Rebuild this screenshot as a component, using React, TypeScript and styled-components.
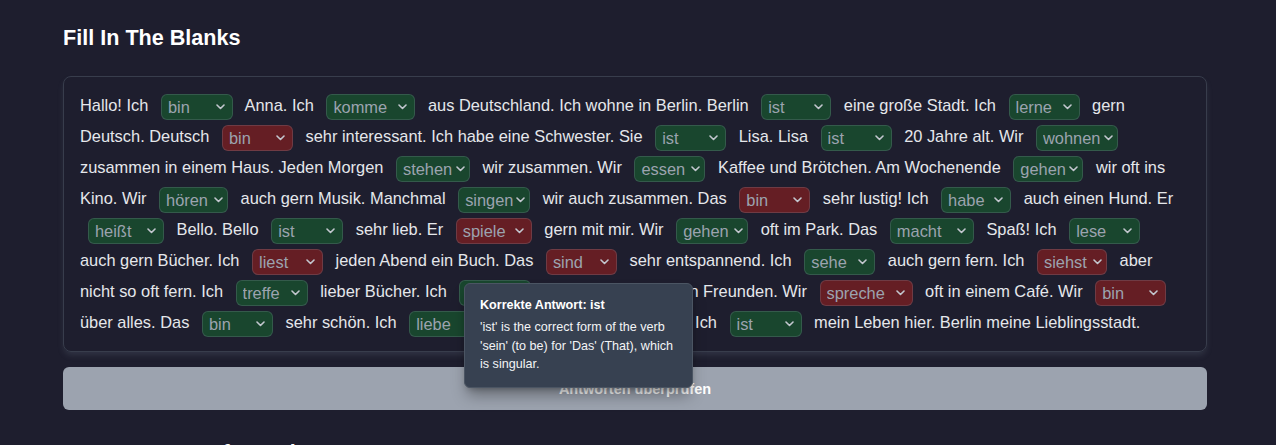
import React from "react";
import styled, { createGlobalStyle, css } from "styled-components";

const GlobalStyle = createGlobalStyle`
  html, body {
    margin: 0;
    padding: 0;
    background: #1e1e2e;
  }
  body {
    font-family: "Liberation Sans", Arial, sans-serif;
    color: #e5e7eb;
  }
`;

type Blank = { value: string; answer: string; width: number; correct: boolean; tight: boolean };
type Segment = string | Blank;

const b = (value: string, width: number, correct = true, answer?: string, tight = false): Blank => ({
  value,
  width,
  correct,
  tight,
  answer: answer ?? value,
});

const passage: Segment[] = [
  "Hallo! Ich", b("bin", 72), "Anna. Ich", b("komme", 89),
  "aus Deutschland. Ich wohne in Berlin. Berlin", b("ist", 70),
  "eine große Stadt. Ich", b("lerne", 71),
  "gern Deutsch. Deutsch", b("bin", 71, false, "ist"),
  "sehr interessant. Ich habe eine Schwester. Sie", b("ist", 71),
  "Lisa. Lisa", b("ist", 71), "20 Jahre alt. Wir", b("wohnen", 82, true, undefined, true),
  "zusammen in einem Haus. Jeden Morgen", b("stehen", 74, true, undefined, true),
  "wir zusammen. Wir", b("essen", 71, true, undefined, true),
  "Kaffee und Brötchen. Am Wochenende", b("gehen", 70, true, undefined, true),
  "wir oft ins Kino. Wir", b("hören", 69, true, undefined, true),
  "auch gern Musik. Manchmal", b("singen", 72, true, undefined, true),
  "wir auch zusammen. Das", b("bin", 71, false, "ist"),
  "sehr lustig! Ich", b("habe", 70), "auch einen Hund. Er", b("heißt", 76),
  "Bello. Bello", b("ist", 72), "sehr lieb. Er", b("spiele", 76, false, "spielt"),
  "gern mit mir. Wir", b("gehen", 72, true, undefined, true), "oft im Park. Das", b("macht", 84),
  "Spaß! Ich", b("lese", 71), "auch gern Bücher. Ich", b("liest", 71, false, "lese"),
  "jeden Abend ein Buch. Das", b("sind", 71, false, "ist"),
  "sehr entspannend. Ich", b("sehe", 71), "auch gern fern. Ich", b("siehst", 70, false, "sehe", true),
  "aber nicht so oft fern. Ich", b("treffe", 72), "lieber Bücher. Ich", b("spiele", 72),
  "oft Tennis mit meinen Freunden. Wir", b("spreche", 93, false, "sprechen"),
  "oft in einem Café. Wir", b("bin", 71, false, "lieben"),
  "über alles. Das", b("bin", 71), "sehr schön. Ich", b("liebe", 72),
  "diese Stadt sehr. Es ist toll. Ich", b("ist", 72),
  "mein Leben hier. Berlin meine Lieblingsstadt.",
];

const Page = styled.main`
  padding: 24px 0 0 63px;
  width: 1144px;
`;

const SectionTitle = styled.h2`
  margin: 0 0 24px;
  font-size: 21.6px;
  line-height: 28px;
  font-weight: 700;
  color: #ffffff;
`;

const Card = styled.section`
  position: relative;
  border: 1px solid #383d4c;
  border-radius: 8px;
  padding: 13px 22px 13px 16px;
  box-shadow: 0 4px 6px -1px rgba(120, 130, 150, 0.22);
`;

const Passage = styled.p`
  margin: 0;
  font-size: 16.4px;
  line-height: 31px;
  color: #e5e7eb;
`;

const BlankBox = styled.span<{ $correct: boolean }>`
  position: relative;
  display: inline-block;
  box-sizing: border-box;
  height: 26px;
  margin: 0 8px;
  vertical-align: middle;
  border-radius: 6px;
  border: 1px solid rgba(148, 163, 184, 0.22);
  ${({ $correct }) =>
    $correct
      ? css`
          background: #19462e;
        `
      : css`
          background: #651e24;
        `}
`;

const BlankSelect = styled.select`
  appearance: none;
  -webkit-appearance: none;
  display: block;
  box-sizing: border-box;
  width: 100%;
  height: 24px;
  margin: 0;
  padding: 1px 2px 0 6px;
  border: none;
  outline: none;
  background: transparent;
  color: #9ca3af;
  font-family: "Liberation Sans", Arial, sans-serif;
  font-size: 16.4px;
  line-height: 22px;
`;

const Chevron = styled.svg<{ $tight: boolean }>`
  position: absolute;
  right: ${({ $tight }) => ($tight ? 4 : 7)}px;
  top: 50%;
  width: 9px;
  height: 6px;
  margin-top: -3px;
  pointer-events: none;
`;

const Tooltip = styled.div`
  position: absolute;
  left: 400px;
  top: 206px;
  z-index: 5;
  box-sizing: border-box;
  width: 229px;
  padding: 14px 15px 13px;
  background: #374151;
  border: 1px solid #4b5563;
  border-radius: 6px;
  box-shadow: 0 10px 15px -3px rgba(0, 0, 0, 0.35), 0 4px 6px -4px rgba(0, 0, 0, 0.3);
  color: #f3f4f6;
`;

const TooltipTitle = styled.div`
  font-size: 12.6px;
  line-height: 14px;
  font-weight: 700;
  color: #ffffff;
  margin-bottom: 6px;
`;

const TooltipBody = styled.div`
  font-size: 12.6px;
  line-height: 18.5px;
`;

const CheckButton = styled.button`
  display: block;
  box-sizing: border-box;
  width: 100%;
  height: 43px;
  margin: 15px 0 29px;
  border: none;
  border-radius: 6px;
  background: #9ca3af;
  color: #ffffff;
  font-family: "Liberation Sans", Arial, sans-serif;
  font-size: 14.5px;
  font-weight: 700;
  cursor: not-allowed;
`;

function BlankField({ blank }: { blank: Blank }) {
  const options = Array.from(new Set([blank.value, blank.answer]));
  return (
    <BlankBox $correct={blank.correct} style={{ width: blank.width }}>
      <BlankSelect defaultValue={blank.value}>
        {options.map((o) => (
          <option key={o} value={o}>
            {o}
          </option>
        ))}
      </BlankSelect>
      <Chevron $tight={blank.tight} viewBox="0 0 9 6" fill="none">
        <path
          d="M1 1l3.5 3.5L8 1"
          stroke="#c3c7cf"
          strokeWidth="1.6"
          strokeLinecap="round"
          strokeLinejoin="round"
        />
      </Chevron>
    </BlankBox>
  );
}

export default function App() {
  return (
    <>
      <GlobalStyle />
      <Page>
        <SectionTitle>Fill In The Blanks</SectionTitle>
        <Card>
          <Passage>
            {passage.map((seg, i) => (
              <React.Fragment key={i}>
                {typeof seg === "string" ? seg : <BlankField blank={seg} />}
                {i < passage.length - 1 ? " " : null}
              </React.Fragment>
            ))}
          </Passage>
          <Tooltip role="tooltip">
            <TooltipTitle>Korrekte Antwort: ist</TooltipTitle>
            <TooltipBody>
              'ist' is the correct form of the verb 'sein' (to be) for 'Das' (That), which is
              singular.
            </TooltipBody>
          </Tooltip>
        </Card>
        <CheckButton disabled>Antworten überprüfen</CheckButton>
        <SectionTitle>Sentence Transformation</SectionTitle>
      </Page>
    </>
  );
}
